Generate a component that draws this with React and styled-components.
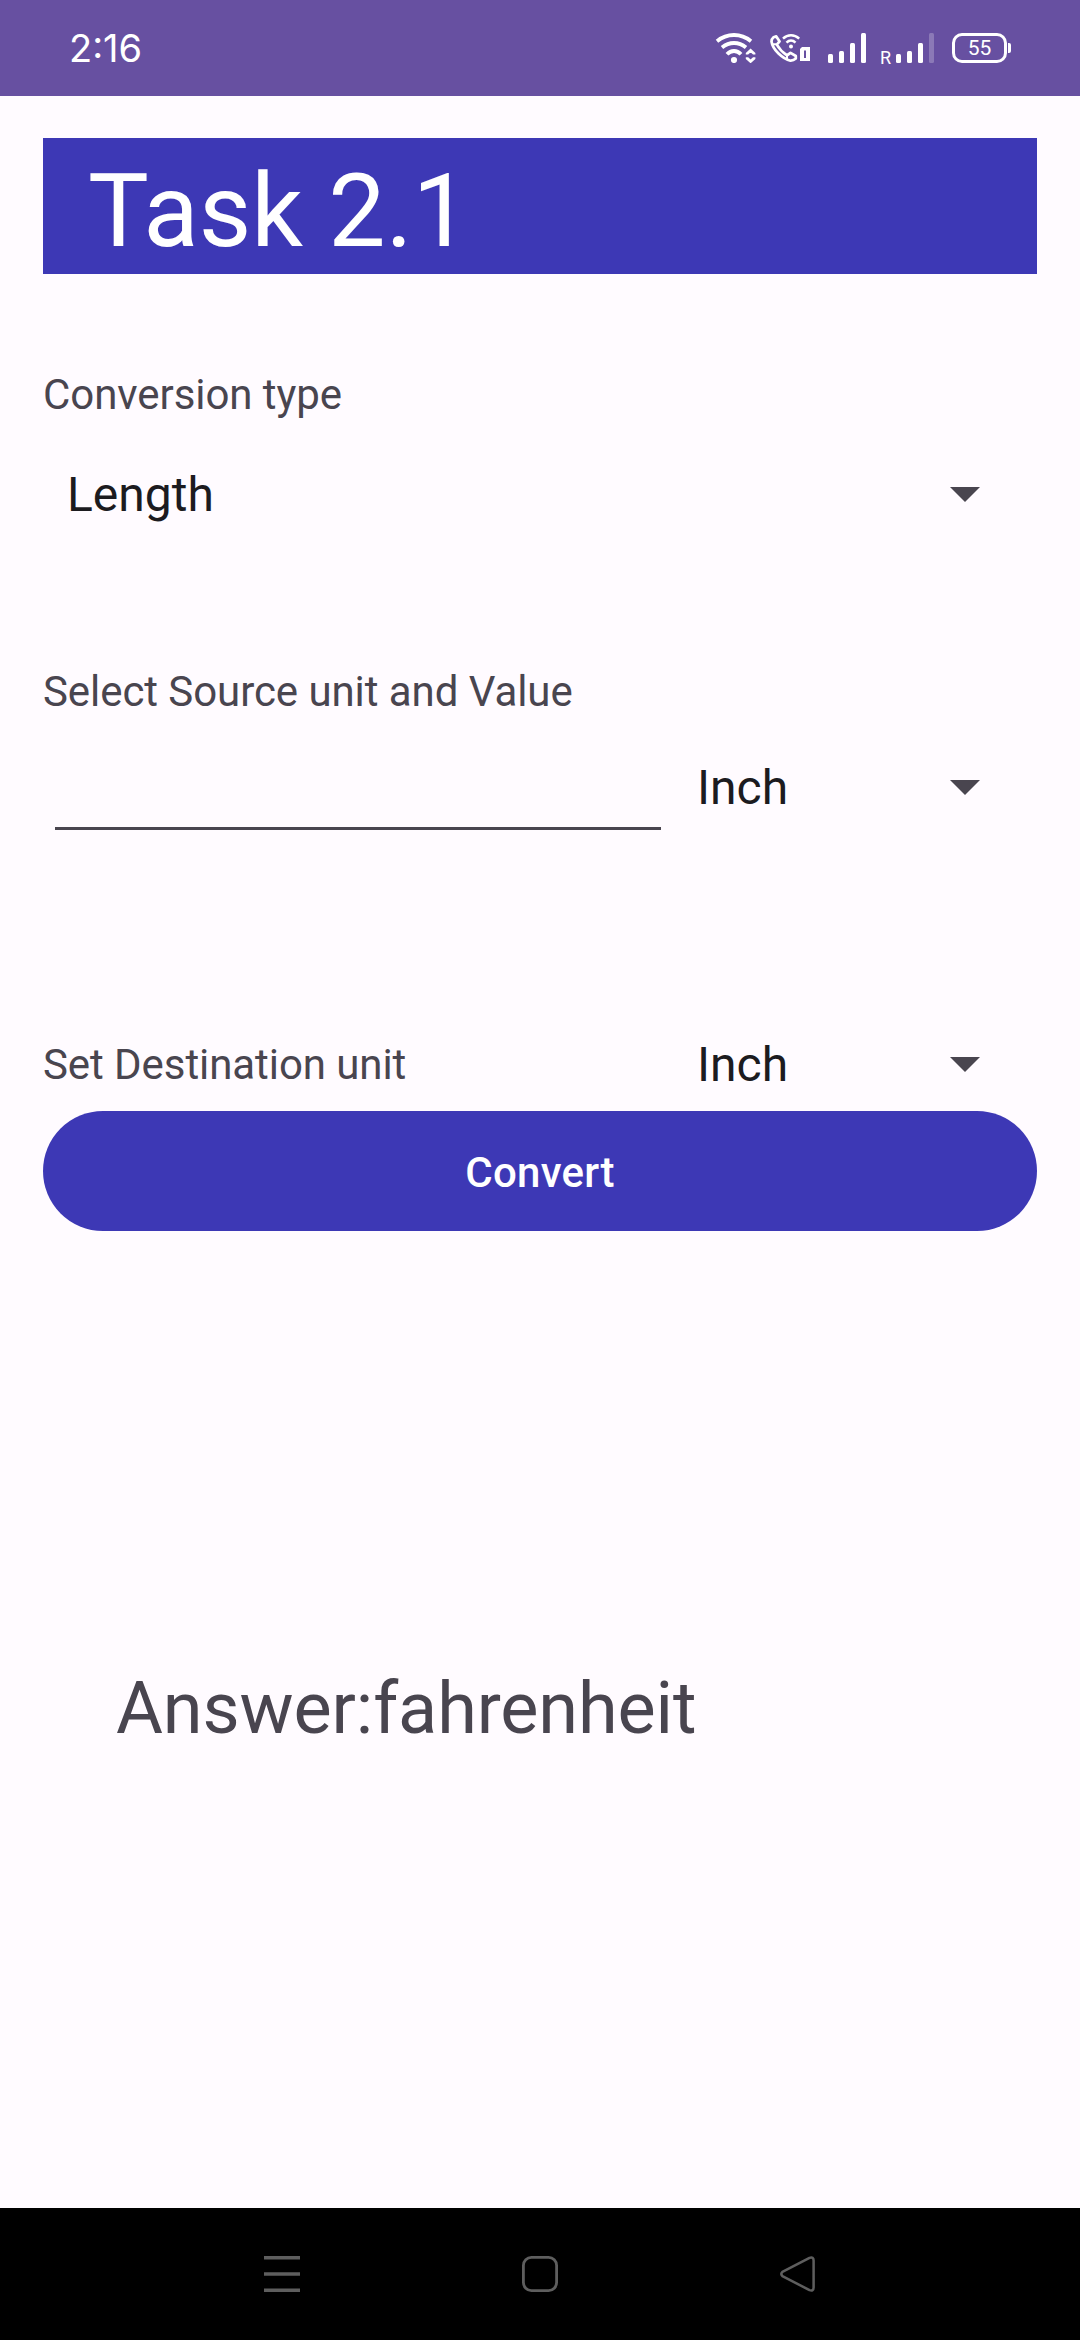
import React from "react";
import styled, { createGlobalStyle } from "styled-components";

const GlobalStyle = createGlobalStyle`
  * { box-sizing: border-box; }
  body { margin: 0; background: #fffbff; }
`;

const Screen = styled.div`
  width: 1080px;
  height: 2340px;
  display: flex;
  flex-direction: column;
  background: #fffbff;
  color: #49454f;
  font-family: Roboto, "Liberation Sans", sans-serif;
  overflow: hidden;
`;

const StatusBar = styled.header`
  height: 96px;
  flex: none;
  display: flex;
  align-items: center;
  justify-content: space-between;
  padding: 0 69px;
  background: #6750a1;
  color: #fff;
`;

const Clock = styled.time`
  font-family: Inter, Roboto, sans-serif;
  font-size: 38px;
  line-height: 46px;
`;

const StatusIcons = styled.div`
  display: flex;
  align-items: center;
`;

const StatusGlyph = styled.svg`
  display: block;
  flex: none;
  margin-right: ${(p) => p.$after || 0}px;
`;

const Roaming = styled.span`
  width: 16px;
  font-size: 18px;
  line-height: 20px;
  padding-top: 20px;
`;

const Battery = styled.div`
  width: 55px;
  height: 30px;
  border: 3px solid #fff;
  border-radius: 10px;
  display: flex;
  align-items: center;
  justify-content: center;
  font-size: 21px;
  line-height: 24px;
  font-weight: 400;
`;

const BatteryTip = styled.span`
  width: 3px;
  height: 10px;
  margin-left: 1px;
  border-radius: 0 2px 2px 0;
  background: #fff;
`;

const Content = styled.main`
  flex: 1;
  display: flex;
  flex-direction: column;
  padding: 42px 43px 0;
`;

const Title = styled.h1`
  margin: 0 0 96px;
  height: 136px;
  padding: 13px 45px 0;
  background: #3d38b5;
  color: #fff;
  font-size: 102px;
  line-height: 120px;
  font-weight: 400;
`;

const Label = styled.label`
  font-size: 42px;
  line-height: 50px;
  letter-spacing: -0.07px;
  color: #49454f;
`;

const Row = styled.div`
  display: flex;
  justify-content: space-between;
  align-items: ${(p) => p.$align || "center"};
  margin-top: ${(p) => p.$top}px;
`;

const Select = styled.div`
  width: ${(p) => p.$width};
  height: 72px;
  display: flex;
  align-items: center;
  justify-content: space-between;
  padding: 0 57px 0 24px;
  font-size: 48px;
  line-height: 72px;
  color: #1c1b1f;
`;

const Caret = styled.span`
  width: 0;
  height: 0;
  margin-bottom: 1px;
  border: 15px solid transparent;
  border-top-color: #49454f;
  border-bottom: 0;
`;

const ValueInput = styled.input`
  width: 606px;
  height: 78px;
  margin: 0 0 0 12px;
  padding: 0;
  border: 0;
  border-bottom: 3px solid #49454f;
  background: transparent;
  font: 400 48px Roboto, sans-serif;
  outline: none;
`;

const SecondLabel = styled(Label)`
  margin-top: 136px;
`;

const ConvertButton = styled.button`
  height: 120px;
  margin: 10px 0 0;
  padding: 4px 0 0;
  border: 0;
  border-radius: 60px;
  background: #3d38b5;
  color: #fff;
  font: 500 42px/50px Roboto, sans-serif;
  letter-spacing: 0.3px;
`;

const Answer = styled.output`
  margin-top: 436px;
  padding-left: 73px;
  font-size: 72px;
  line-height: 84px;
  letter-spacing: -0.12px;
`;

const NavBar = styled.nav`
  height: 132px;
  flex: none;
  display: flex;
  justify-content: space-between;
  align-items: center;
  padding: 0 264px;
  background: #000;
`;

const NavIcon = styled.svg`
  display: block;
  fill: none;
  stroke: #5e5e5e;
`;

function Spinner({ value, width }) {
  return (
    <Select $width={width} role="combobox" aria-label={value}>
      <span>{value}</span>
      <Caret />
    </Select>
  );
}

function SignalBars({ weak, after }) {
  return (
    <StatusGlyph $after={after} width="38" height="30" viewBox="0 0 38 30" fill="#fff">
      <rect x="0" y="21" width="5" height="9" rx="1.5" />
      <rect x="11" y="18" width="5" height="12" rx="1.5" />
      <rect x="22" y="10" width="5" height="20" rx="1.5" />
      <rect x="33" y="0" width="5" height="30" rx="1.5" opacity={weak ? 0.24 : 1} />
    </StatusGlyph>
  );
}

function WifiIcon() {
  return (
    <StatusGlyph $after={13} width="42" height="30" viewBox="715 33 42 30" fill="none" stroke="#fff">
      <path d="M717 41.2Q724.5 35 734 35T751 41.2" strokeWidth="3.8" />
      <path d="M722 47.5Q727.5 43 734 43T746 47.5" strokeWidth="3.8" />
      <path d="M727 54.3Q730 51 734 51T741 54.3" strokeWidth="3.8" />
      <circle cx="734" cy="60" r="3.1" fill="#fff" stroke="none" />
      <path d="M747.2 54.5V53.5L750.6 50.4L754 53.5V54.5M747.2 57.3V58.3L750.6 61.4L754 58.3V57.3" strokeWidth="2.8" />
    </StatusGlyph>
  );
}

function WifiCallIcon() {
  return (
    <StatusGlyph $after={18} width="40" height="30" viewBox="770 34 40 30" fill="none" stroke="#fff">
      <path
        d="M773.5 38.3L776.3 37.4L779.6 42.4L776.8 45.6Q780.5 52 787 56.4L790.5 53.8L795.8 57V59.6Q793.5 61.8 790.5 61.7Q784.5 60.3 778.5 54.5Q772.3 48.5 771.5 42.5Q771.5 40 773.5 38.3Z"
        strokeWidth="2.7"
        strokeLinejoin="round"
      />
      <path d="M771.8 45.3H776.3M787 56V61" strokeWidth="2" />
      <path d="M783 39.6Q786.5 36.2 791 36.2T799.2 39.6M786.5 43.6Q788.5 41.6 791 41.6T795.5 43.6" strokeWidth="2.5" />
      <circle cx="791" cy="47.5" r="2" fill="#fff" stroke="none" />
      <path d="M802 48H810V62H800V50ZM804 51.5V59H806V51.5Z" fill="#fff" fillRule="evenodd" stroke="none" />
    </StatusGlyph>
  );
}

export default function App() {
  return (
    <Screen>
      <GlobalStyle />
      <StatusBar>
        <Clock>2:16</Clock>
        <StatusIcons>
          <WifiIcon />
          <WifiCallIcon />
          <SignalBars after={14} />
          <Roaming>R</Roaming>
          <SignalBars weak after={18} />
          <Battery>55</Battery>
          <BatteryTip />
        </StatusIcons>
      </StatusBar>
      <Content>
        <Title>Task 2.1</Title>
        <Label>Conversion type</Label>
        <Row $top={39}>
          <Spinner value="Length" width="100%" />
        </Row>
        <SecondLabel>Select Source unit and Value</SecondLabel>
        <Row $top={35} $align="flex-start">
          <ValueInput aria-label="Value" />
          <Spinner value="Inch" width="364px" />
        </Row>
        <Row $top={199}>
          <Label>Set Destination unit</Label>
          <Spinner value="Inch" width="364px" />
        </Row>
        <ConvertButton>Convert</ConvertButton>
        <Answer>Answer:fahrenheit</Answer>
      </Content>
      <NavBar>
        <NavIcon width="36" height="36" viewBox="0 0 36 36">
          <path d="M0 1.75H36M0 18H36M0 34.25H36" strokeWidth="3.5" />
        </NavIcon>
        <NavIcon width="36" height="36" viewBox="0 0 36 36">
          <rect x="1.4" y="1.4" width="33.2" height="33.2" rx="8" strokeWidth="2.8" />
        </NavIcon>
        <NavIcon width="36" height="36" viewBox="0 0 36 36">
          <path
            d="M2.4 15.9L29.5 1.9Q33.6 0.5 33.6 4.5V31.5Q33.6 35.5 29.5 34.1L2.4 20.1Q0.3 18 2.4 15.9Z"
            strokeWidth="2.5"
            strokeLinejoin="round"
          />
        </NavIcon>
      </NavBar>
    </Screen>
  );
}
